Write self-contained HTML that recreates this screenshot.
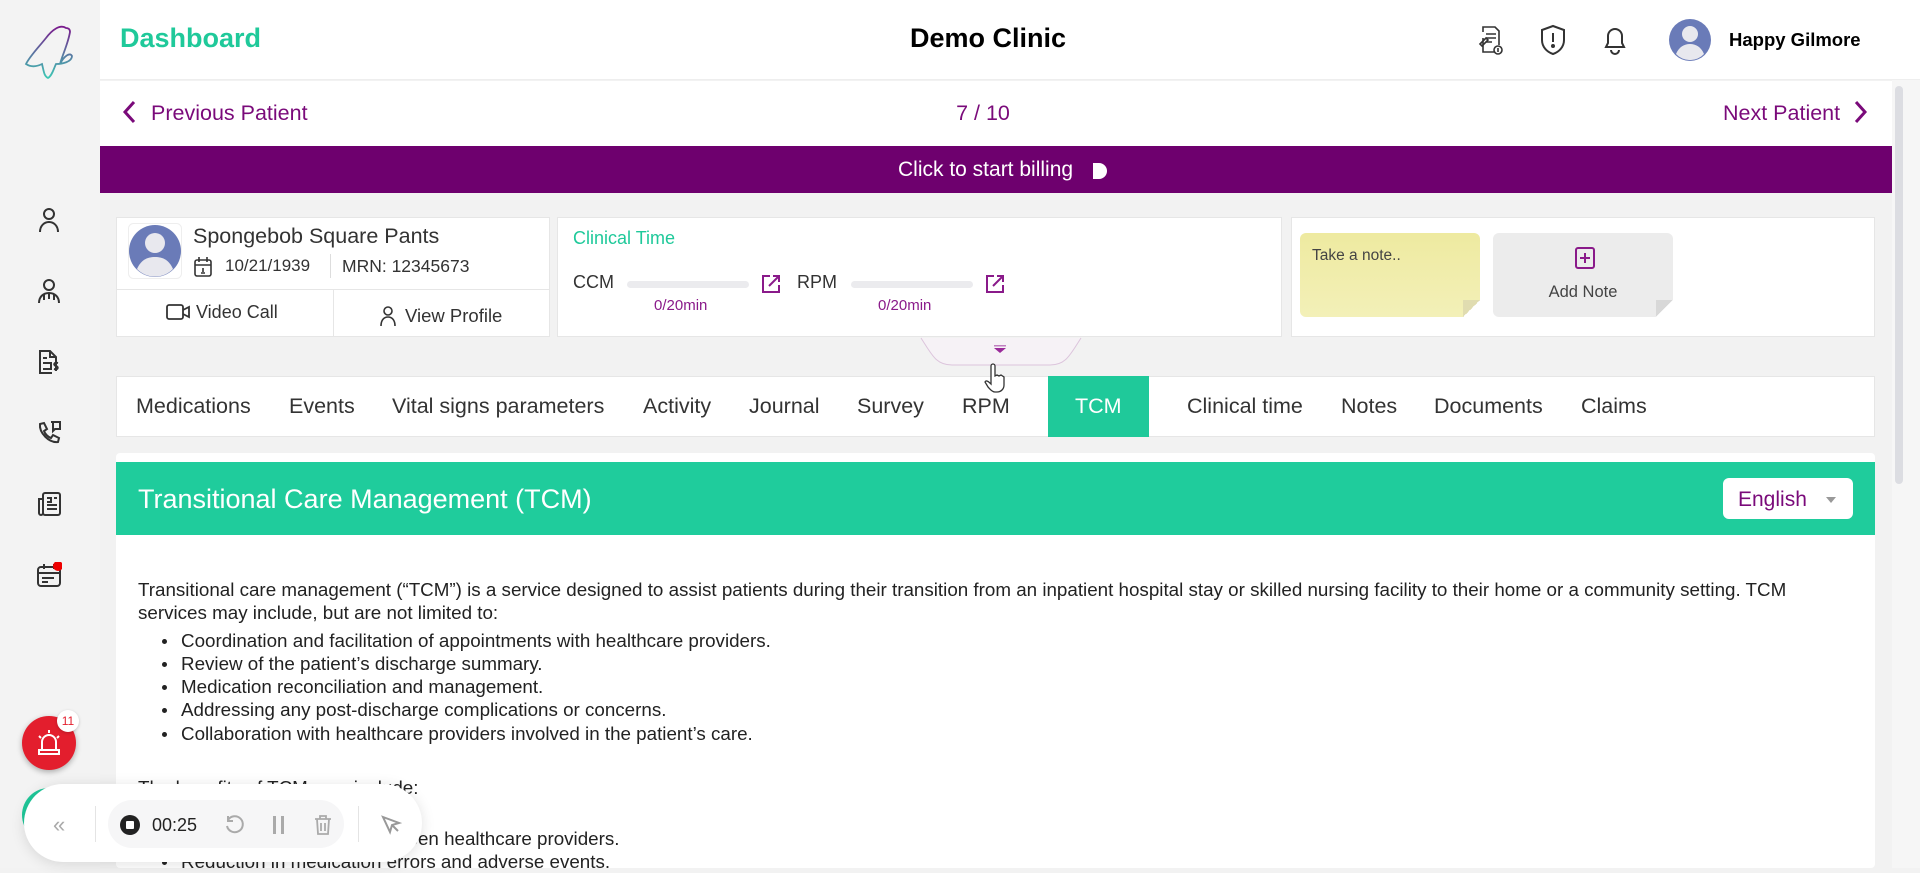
<!DOCTYPE html>
<html><head><meta charset="utf-8"><style>
*{box-sizing:border-box;margin:0;padding:0}
body{width:1920px;height:868px;overflow:hidden;font-family:"Liberation Sans",Arial,sans-serif;background:#f2f2f2;position:relative;color:#333}
.abs{position:absolute}
.side{left:0;top:0;width:100px;height:868px;background:#f3f3f3}
.ic{position:absolute;left:36px;width:26px;height:26px}
.card{position:absolute;background:#fff;border:1px solid #e6e6e6}
.tab{position:absolute;top:376px;height:61px;line-height:61px;font-size:21.5px;color:#333}
.body{left:138px;font-size:18.8px;color:#222;line-height:23.3px}
.body li{margin-left:43px;list-style:none;position:relative}
.body li:before{content:"";position:absolute;left:-19px;top:10px;width:5px;height:5px;border-radius:50%;background:#222}
</style></head><body>
<div class="abs side"></div>
<svg class="abs" style="left:22px;top:20px" width="56" height="60" viewBox="0 0 56 60"><defs><linearGradient id="g" x1="0" y1="0" x2="0" y2="1"><stop offset="0" stop-color="#7a1a8c"/><stop offset="1" stop-color="#3cc8b4"/></linearGradient></defs><path d="M44 8 C38 4 30 10 24 18 C16 28 8 36 4 44 C10 48 16 46 20 44 C22 52 22 56 26 58 C30 56 32 48 34 44 C40 44 50 42 50 36 C48 32 42 36 38 44 C40 36 46 24 48 12 C48 9 46 8 44 8Z" fill="none" stroke="url(#g)" stroke-width="1.8"/></svg>
<svg class="ic" style="top:207px" viewBox="0 0 26 26" fill="none" stroke="#333" stroke-width="2"><circle cx="13" cy="7" r="5"/><path d="M4 25c0-6 4-10 9-10s9 4 9 10"/></svg>
<svg class="ic" style="top:278px" viewBox="0 0 26 26" fill="none" stroke="#333" stroke-width="2"><circle cx="13" cy="7" r="5"/><path d="M3 25c0-6 4-10 10-10s10 4 10 10M8 16v6M18 16v6M13 16v5"/></svg>
<svg class="ic" style="top:349px" viewBox="0 0 26 26" fill="none" stroke="#333" stroke-width="2"><path d="M16 24H4V2h10l6 6v4M14 2v6h6M7 9h4M7 14h8v6H7M22 14c-4-1-5 2-2 3s2 4-2 3M20 12v10"/></svg>
<svg class="ic" style="top:420px" viewBox="0 0 26 26" fill="none" stroke="#333" stroke-width="2"><path d="M4 4l4-1 3 6-3 2c1 3 4 6 7 7l2-3 6 3-1 4c-9 1-19-9-18-18z"/><path d="M15 2h9v7h-5l-2 2V2"/></svg>
<svg class="ic" style="top:491px" viewBox="0 0 26 26" fill="none" stroke="#333" stroke-width="2"><rect x="7" y="2" width="17" height="22" rx="2"/><path d="M7 8H3v14a2 2 0 004 0M11 7h4v4h-4M18 7h3M11 14h10M11 18h10"/></svg>
<svg class="ic" style="top:562px" viewBox="0 0 26 26" fill="none" stroke="#333" stroke-width="2"><rect x="2" y="5" width="22" height="19" rx="3"/><path d="M2 11h22M8 2v5M18 2v5M6 16h12M6 20h6"/><circle cx="22" cy="4" r="5" fill="#e00" stroke="none"/></svg>
<div class="abs" style="left:22px;top:716px;width:54px;height:54px;border-radius:50%;background:#e31e2d;box-shadow:0 2px 6px rgba(0,0,0,.3)"></div>
<svg class="abs" style="left:36px;top:728px" width="26" height="28" viewBox="0 0 26 28" fill="none" stroke="#fff" stroke-width="2"><path d="M6 22v-8a7 7 0 0114 0v8M3 22h20v4H3zM13 2v3M3 8l2 2M23 8l-2 2"/></svg>
<div class="abs" style="left:57px;top:710px;width:22px;height:22px;border-radius:50%;background:#fff;color:#e31e2d;font-size:12px;text-align:center;line-height:22px;box-shadow:0 1px 3px rgba(0,0,0,.2)">11</div>
<div class="abs" style="left:22px;top:788px;width:54px;height:54px;border-radius:50%;background:#1fc99a"></div>
<div class="abs" style="left:100px;top:0;width:1820px;height:80px;background:#fff;border-bottom:1px solid #eee"></div>
<div class="abs" style="left:120px;top:23px;font-size:27px;font-weight:bold;color:#1fc99a">Dashboard</div>
<div class="abs" style="left:860px;width:256px;text-align:center;top:23px;font-size:27px;font-weight:bold;color:#000">Demo Clinic</div>
<svg class="abs" style="left:1477px;top:24px" width="28" height="32" viewBox="0 0 28 32" fill="none" stroke="#333" stroke-width="1.6"><path d="M6 8V3h12l4 4v14M6 14v14h12M9 10h10M9 14h10M9 18h6"/><circle cx="21" cy="26" r="4"/><path d="M21 24v4M3 20l6-6 2 2-6 6z"/></svg>
<svg class="abs" style="left:1539px;top:24px" width="28" height="32" viewBox="0 0 28 32" fill="none" stroke="#333" stroke-width="2"><path d="M14 2l11 4v10c0 7-5 12-11 14C8 28 3 23 3 16V6z"/><path d="M14 9v9"/><circle cx="14" cy="22" r="1" fill="#333"/></svg>
<svg class="abs" style="left:1601px;top:24px" width="28" height="32" viewBox="0 0 28 32" fill="none" stroke="#333" stroke-width="2"><path d="M5 23h18l-2-4v-7a7 7 0 00-14 0v7zM10 26a4 4 0 008 0"/></svg>
<svg class="abs" style="left:1669px;top:18px" width="42" height="44" viewBox="0 0 42 44"><circle cx="21" cy="22" r="21" fill="#6a7bb8"/><circle cx="21" cy="16" r="8" fill="#e8e8ee"/><path d="M7 36c3-7 8-10 14-10s11 3 14 10a19 19 0 01-28 0z" fill="#e8e8ee"/></svg>
<div class="abs" style="left:1729px;top:29px;font-size:18.5px;font-weight:bold;color:#000">Happy Gilmore</div>
<div class="abs" style="left:100px;top:81px;width:1792px;height:65px;background:#fff"></div>
<svg class="abs" style="left:122px;top:100px" width="14" height="24" viewBox="0 0 14 24" fill="none" stroke="#7a0a7a" stroke-width="3"><path d="M12 2L3 12l9 10"/></svg>
<div class="abs" style="left:151px;top:101px;font-size:21.5px;color:#7a0a7a">Previous Patient</div>
<div class="abs" style="left:920px;width:126px;text-align:center;top:101px;font-size:21.5px;color:#7a0a7a">7 / 10</div>
<div class="abs" style="left:1723px;top:101px;font-size:21.5px;color:#7a0a7a">Next Patient</div>
<svg class="abs" style="left:1854px;top:100px" width="14" height="24" viewBox="0 0 14 24" fill="none" stroke="#7a0a7a" stroke-width="3"><path d="M2 2l9 10-9 10"/></svg>
<div class="abs" style="left:100px;top:146px;width:1792px;height:47px;background:#6e006e"></div>
<div class="abs" style="left:898px;top:158px;font-size:21px;color:#fff">Click to start billing</div>
<svg class="abs" style="left:1091px;top:161px" width="18" height="20" viewBox="0 0 18 20"><path d="M2 2h6a8 8 0 010 16H2z" fill="#fff"/></svg>
<div class="abs" style="left:1892px;top:80px;width:28px;height:788px;background:#f6f6f6"></div>
<div class="abs" style="left:1895px;top:86px;width:8px;height:398px;border-radius:4px;background:#dcdde2"></div>
<div class="card" style="left:116px;top:217px;width:434px;height:120px"></div>
<div class="abs" style="left:116px;top:289px;width:434px;height:1px;background:#e6e6e6"></div>
<div class="abs" style="left:333px;top:289px;width:1px;height:48px;background:#e6e6e6"></div>
<svg class="abs" style="left:128px;top:223px" width="54" height="56" viewBox="0 0 54 56"><rect x="0.5" y="0.5" width="53" height="55" rx="5" fill="#fff" stroke="#eee"/><circle cx="27" cy="28" r="26" fill="#6a7bb8"/><circle cx="27" cy="20" r="10" fill="#e8e8ee"/><path d="M9 46c4-9 10-12 18-12s14 3 18 12a25 25 0 01-36 0z" fill="#e8e8ee"/></svg>
<div class="abs" style="left:193px;top:224px;font-size:21.5px;color:#333">Spongebob Square Pants</div>
<svg class="abs" style="left:193px;top:256px" width="20" height="22" viewBox="0 0 20 22" fill="none" stroke="#333" stroke-width="1.6"><rect x="2" y="4" width="16" height="16" rx="2"/><path d="M2 9h16M6 1v5M14 1v5M10 12v4M8 17h4"/></svg>
<div class="abs" style="left:225px;top:256px;font-size:17px;color:#333">10/21/1939</div>
<div class="abs" style="left:330px;top:254px;width:1px;height:24px;background:#ddd"></div>
<div class="abs" style="left:342px;top:256px;font-size:17.5px;color:#333">MRN: 12345673</div>
<svg class="abs" style="left:166px;top:303px" width="26" height="18" viewBox="0 0 26 18" fill="none" stroke="#333" stroke-width="1.8"><rect x="1" y="2" width="16" height="14" rx="2"/><path d="M17 7l6-3v10l-6-3"/></svg>
<div class="abs" style="left:196px;top:302px;font-size:18px;color:#333">Video Call</div>
<svg class="abs" style="left:380px;top:305px" width="16" height="22" viewBox="0 0 16 22" fill="none" stroke="#333" stroke-width="1.6"><circle cx="8" cy="6" r="4"/><path d="M1 21c0-6 3-9 7-9s7 3 7 9"/></svg>
<div class="abs" style="left:405px;top:305px;font-size:18.5px;color:#333">View Profile</div>
<div class="card" style="left:557px;top:217px;width:725px;height:120px"></div>
<div class="abs" style="left:573px;top:228px;font-size:18px;color:#1fc99a">Clinical Time</div>
<div class="abs" style="left:573px;top:272px;font-size:18px;color:#333">CCM</div>
<div class="abs" style="left:627px;top:281px;width:122px;height:7px;border-radius:4px;background:#ebebee"></div>
<div class="abs" style="left:654px;top:297px;font-size:15px;color:#8a1a8a">0/20min</div>
<svg class="abs" style="left:761px;top:274px" width="20" height="20" viewBox="0 0 20 20" fill="none" stroke="#8a1a8a" stroke-width="2"><path d="M9 2H2v16h16v-7M12 2h6v6M18 2L8 12"/></svg>
<div class="abs" style="left:797px;top:272px;font-size:18px;color:#333">RPM</div>
<div class="abs" style="left:851px;top:281px;width:122px;height:7px;border-radius:4px;background:#ebebee"></div>
<div class="abs" style="left:878px;top:297px;font-size:15px;color:#8a1a8a">0/20min</div>
<svg class="abs" style="left:985px;top:274px" width="20" height="20" viewBox="0 0 20 20" fill="none" stroke="#8a1a8a" stroke-width="2"><path d="M9 2H2v16h16v-7M12 2h6v6M18 2L8 12"/></svg>
<svg class="abs" style="left:918px;top:337px" width="166" height="30" viewBox="0 0 166 30"><path d="M3 1 C14 18 18 28 34 28 H132 C148 28 152 18 163 1" fill="#f6f2f6" stroke="#dcc4dc" stroke-width="1"/><path d="M76 11h12l-6 5z" fill="#9a2a9a"/><rect x="76" y="8" width="12" height="1.5" fill="#c080c0"/></svg>
<div class="card" style="left:1291px;top:217px;width:584px;height:120px"></div>
<div class="abs" style="left:1300px;top:233px;width:180px;height:84px;background:linear-gradient(#eeeaa0,#f3f0b8);border-radius:6px"></div>
<div class="abs" style="left:1463px;top:300px;width:17px;height:17px;background:linear-gradient(135deg,#e0dcb0 50%,#fff 50%)"></div>
<div class="abs" style="left:1312px;top:247px;font-size:15.5px;color:#444">Take a note..</div>
<div class="abs" style="left:1493px;top:233px;width:180px;height:84px;background:#ececec;border-radius:6px"></div>
<div class="abs" style="left:1656px;top:300px;width:17px;height:17px;background:linear-gradient(135deg,#d8d8d8 50%,#fff 50%)"></div>
<svg class="abs" style="left:1574px;top:246px" width="22" height="24" viewBox="0 0 22 24" fill="none" stroke="#8a1a8a" stroke-width="2"><rect x="2" y="2" width="18" height="20" rx="2"/><path d="M11 7v10M6 12h10"/></svg>
<div class="abs" style="left:1493px;width:180px;text-align:center;top:283px;font-size:16.5px;color:#444">Add Note</div>
<div class="card" style="left:116px;top:376px;width:1759px;height:61px"></div>
<div class="abs" style="left:1048px;top:376px;width:101px;height:61px;background:#1fc99a"></div>
<div class="tab" style="left:136px">Medications</div>
<div class="tab" style="left:289px">Events</div>
<div class="tab" style="left:392px">Vital signs parameters</div>
<div class="tab" style="left:643px">Activity</div>
<div class="tab" style="left:749px">Journal</div>
<div class="tab" style="left:857px">Survey</div>
<div class="tab" style="left:962px">RPM</div>
<div class="tab" style="left:1075px;color:#fff">TCM</div>
<div class="tab" style="left:1187px">Clinical time</div>
<div class="tab" style="left:1341px">Notes</div>
<div class="tab" style="left:1434px">Documents</div>
<div class="tab" style="left:1581px">Claims</div>
<svg class="abs" style="left:983px;top:360px" width="24" height="34" viewBox="0 0 24 34"><path d="M8 24V6a2 2 0 014 0v10l2-1 2 1 2-1 3 2v8c0 4-3 7-7 7h-2c-3 0-5-3-7-5l-3-5c1-2 3-1 6 2z" fill="#fff" stroke="#333" stroke-width="1.3"/></svg>
<div class="abs" style="left:116px;top:453px;width:1759px;height:415px;background:#fff;border-radius:4px"></div>
<div class="abs" style="left:116px;top:462px;width:1759px;height:73px;background:#1fcc9c"></div>
<div class="abs" style="left:138px;top:484px;font-size:27px;color:#fff">Transitional Care Management (TCM)</div>
<div class="abs" style="left:1723px;top:478px;width:130px;height:41px;background:#fff;border-radius:6px"></div>
<div class="abs" style="left:1738px;top:488px;font-size:21px;color:#7a0a7a">English</div>
<div class="abs" style="left:1826px;top:497px;width:0;height:0;border-left:5px solid transparent;border-right:5px solid transparent;border-top:6px solid #999"></div>
<div class="abs body" style="top:578px;width:1705px">Transitional care management (“TCM”) is a service designed to assist patients during their transition from an inpatient hospital stay or skilled nursing facility to their home or a community setting. TCM services may include, but are not limited to:
<ul style="margin-top:4px"><li>Coordination and facilitation of appointments with healthcare providers.</li><li>Review of the patient’s discharge summary.</li><li>Medication reconciliation and management.</li><li>Addressing any post-discharge complications or concerns.</li><li>Collaboration with healthcare providers involved in the patient’s care.</li></ul>
<div style="margin-top:31px">The benefits of TCM may include:</div>
<ul style="margin-top:4px"><li>Improved continuity of care.</li><li>Better communication between healthcare providers.</li><li>Reduction in medication errors and adverse events.</li></ul>
</div>
<div class="abs" style="left:24px;top:784px;width:398px;height:78px;border-radius:39px;background:#fff;box-shadow:0 2px 14px rgba(0,0,0,.12)"></div>
<div class="abs" style="left:53px;top:812px;font-size:22px;color:#aaa">«</div>
<div class="abs" style="left:95px;top:806px;width:1px;height:36px;background:#e4e4e4"></div>
<div class="abs" style="left:108px;top:800px;width:236px;height:48px;border-radius:24px;background:#f6f6f7"></div>
<div class="abs" style="left:120px;top:815px;width:20px;height:20px;border-radius:50%;background:#222"></div>
<div class="abs" style="left:126px;top:821px;width:8px;height:8px;background:#fff;border-radius:1px"></div>
<div class="abs" style="left:152px;top:815px;font-size:18px;color:#222">00:25</div>
<svg class="abs" style="left:224px;top:814px" width="22" height="22" viewBox="0 0 22 22" fill="none" stroke="#aaa" stroke-width="2"><path d="M4 6a8 8 0 11-1 6M4 2v5h5"/></svg>
<div class="abs" style="left:273px;top:816px;width:3px;height:18px;background:#aaa"></div>
<div class="abs" style="left:281px;top:816px;width:3px;height:18px;background:#aaa"></div>
<svg class="abs" style="left:313px;top:814px" width="20" height="22" viewBox="0 0 20 22" fill="none" stroke="#aaa" stroke-width="1.8"><path d="M2 5h16M7 5V2h6v3M4 5l1 15h10l1-15M8 9v8M12 9v8"/></svg>
<div class="abs" style="left:358px;top:806px;width:1px;height:36px;background:#e4e4e4"></div>
<svg class="abs" style="left:380px;top:814px" width="22" height="22" viewBox="0 0 22 22" fill="none" stroke="#999" stroke-width="2"><path d="M3 3l16 6-7 2-2 7z M12 11l6 6"/></svg>
</body></html>
